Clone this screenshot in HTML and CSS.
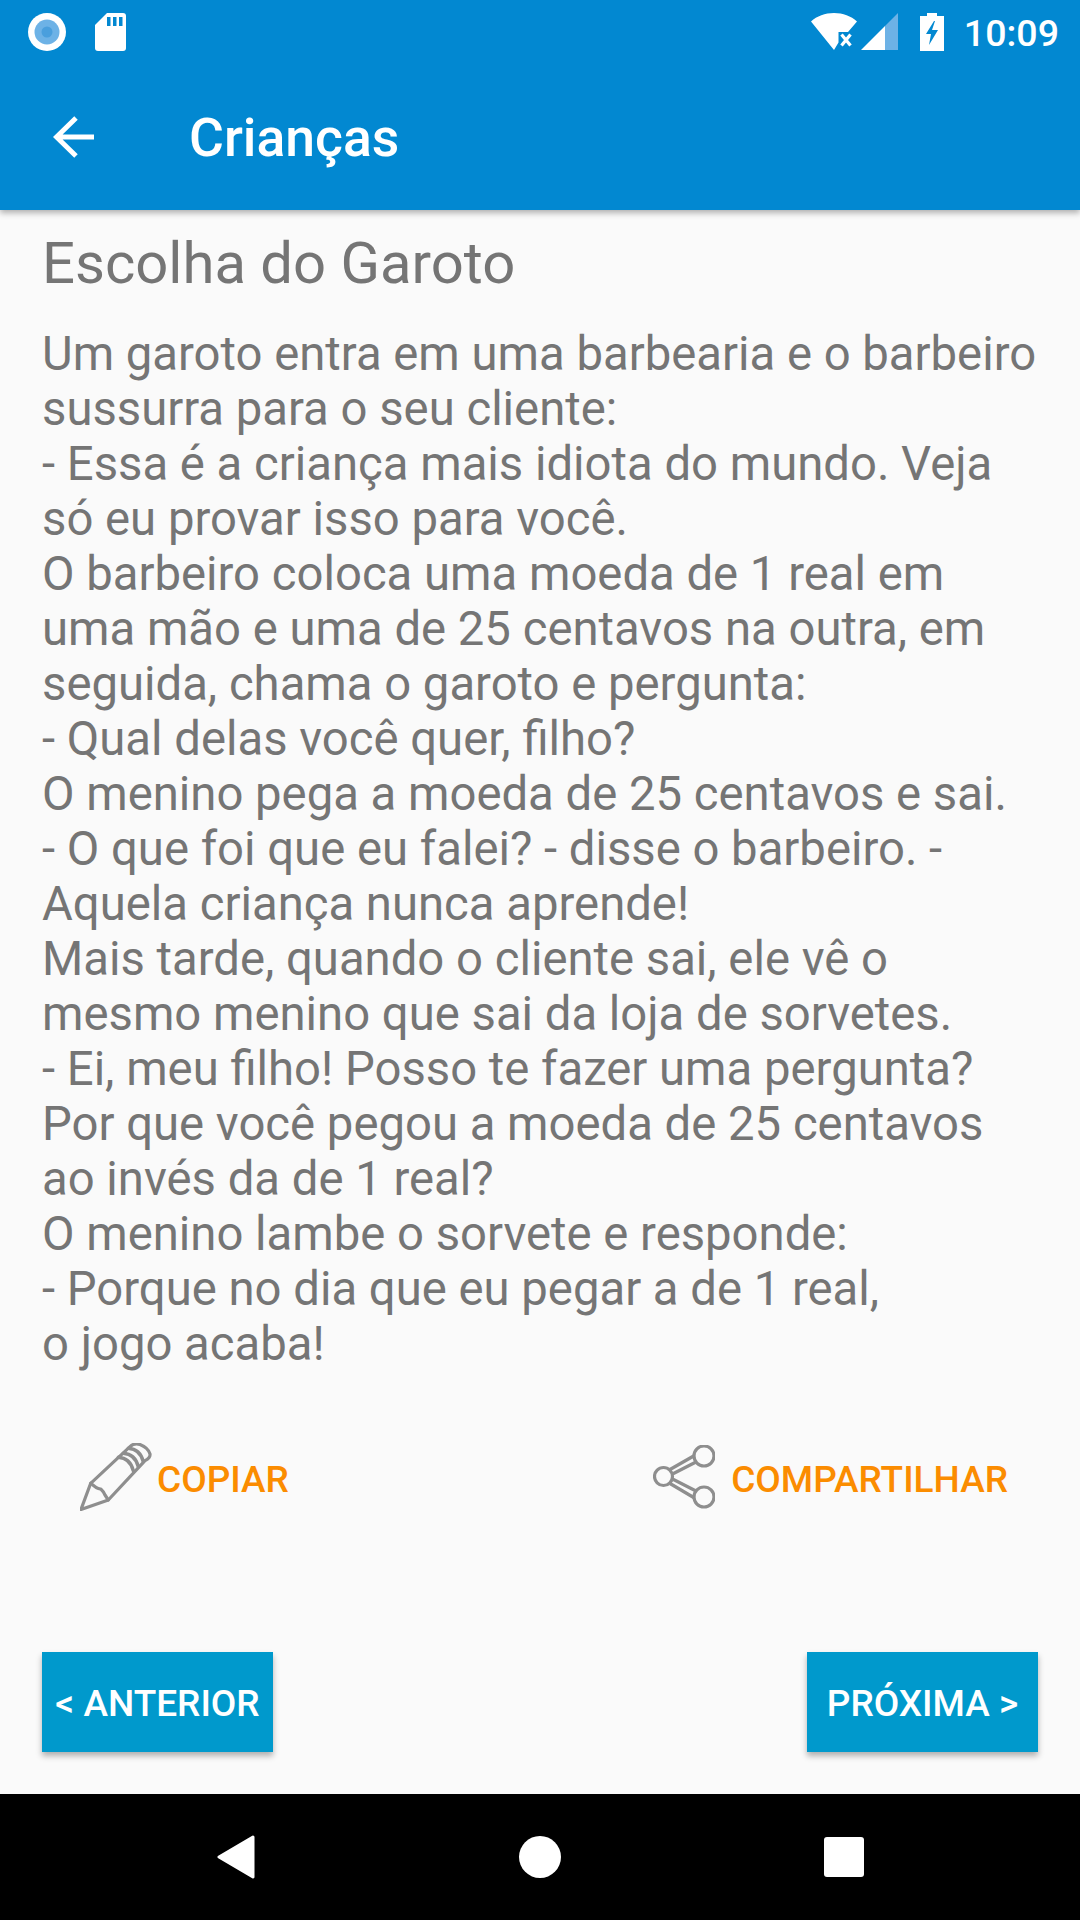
FILE: index.html
```html
<!DOCTYPE html>
<html lang="pt">
<head>
<meta charset="utf-8">
<title>Crianças</title>
<link rel="stylesheet" href="styles.css">
</head>
<body>
<div class="screen">
  <header class="header">
    <div class="statusbar">
      <div class="status-left">
        <svg class="ic-rec" width="38" height="38" viewBox="0 0 38 38"><circle cx="19" cy="19" r="19" fill="#fff"/><circle cx="19" cy="19" r="12.500" fill="#6db2e6"/><circle cx="19" cy="19" r="5.500" fill="#4a9fdd"/></svg>
        <svg class="ic-sd" width="31" height="38" viewBox="0 0 31 38"><path d="M12 0H28a3 3 0 0 1 3 3V35a3 3 0 0 1-3 3H3a3 3 0 0 1-3-3V12Z" fill="#fff"/><path d="M12 4h3.500v9H12zM18 4h3.500v9H18zM24 4h3.500v9H24z" fill="#0288d1"/></svg>
      </div>
      <div class="status-right">
        <svg class="ic-wifi" width="46" height="38" viewBox="0 0 46 38"><path d="M0 8.500C6 3 14 0 23 0s17 3 23 8.500L37 19H27.500V29.500L23 37Z" fill="#fff"/><path d="M30.500 21.500l9 11M39.500 21.500l-9 11" stroke="#fff" stroke-width="3.200" fill="none"/></svg>
        <svg class="ic-signal" width="38" height="38" viewBox="0 0 38 38"><path d="M37 0V37H24V13Z" fill="#6db2e6"/><path d="M24 13V37H0Z" fill="#fff"/></svg>
        <svg class="ic-batt" width="24" height="38" viewBox="0 0 24 38"><path d="M7 0h10v3h7V38H0V3h7Z" fill="#fff"/><path d="M14 8L6 21h5l-2 11 9-15h-6l3-9Z" fill="#0288d1"/></svg>
        <span class="clock">10:09</span>
      </div>
    </div>
    <div class="appbar">
      <svg class="ic-back" width="42" height="42" viewBox="0 0 42 42"><path d="M41 21H3M23 2 3.500 21 23 40" fill="none" stroke="#fff" stroke-width="5"/></svg>
      <h1 class="appbar-title">Crianças</h1>
    </div>
  </header>

  <main class="content">
    <h2 class="joke-title">Escolha do Garoto</h2>
    <p class="joke-text">Um garoto entra em uma barbearia e o barbeiro sussurra para o seu cliente:<br>- Essa é a criança mais idiota do mundo. Veja só eu provar isso para você.<br>O barbeiro coloca uma moeda de 1 real em uma mão e uma de 25 centavos na outra, em seguida, chama o garoto e pergunta:<br>- Qual delas você quer, filho?<br>O menino pega a moeda de 25 centavos e sai.<br>- O que foi que eu falei? - disse o barbeiro. - Aquela criança nunca aprende!<br>Mais tarde, quando o cliente sai, ele vê o mesmo menino que sai da loja de sorvetes.<br>- Ei, meu filho! Posso te fazer uma pergunta? Por que você pegou a moeda de 25 centavos ao invés da de 1 real?<br>O menino lambe o sorvete e responde:<br>- Porque no dia que eu pegar a de 1 real,<br>o jogo acaba!</p>
    <div class="actions">
      <div class="action">
        <svg class="ic-pencil" width="72" height="68" viewBox="0 0 72 68" fill="none" stroke="#8e8e8e" stroke-width="3.200" stroke-linejoin="round" stroke-linecap="round"><path d="M1 66.500 10.700 40.300 50 3.700C53 .8 57 .3 60 1.500 65 3.500 69 7.500 70 11 70.500 14 68 16 65 17.700L28.300 57Z"/><path d="M10.700 40.300C13 42 15.500 44.500 17.700 45.300 19 45.800 20 45.800 21 46.300 23 48 24 50 25 52L28.300 57"/><path d="M38.300 14.300Q50 15 53.300 27.700M43.300 10.300Q55 11 58.300 23.700M48.300 5.300Q60 6 63.300 18.700" stroke-width="3.400"/></svg>
        <span class="action-label">COPIAR</span>
      </div>
      <div class="action">
        <svg class="ic-share" width="62" height="64" viewBox="0 0 62 64" fill="none" stroke="#8e8e8e" stroke-width="3.200"><circle cx="10.500" cy="31.500" r="9"/><circle cx="51" cy="11" r="10"/><circle cx="51" cy="52" r="10"/><path d="M17 24.500 41.500 10.500M19.500 29 43 17M19.500 34 43 46M17 38.500 41.500 53"/></svg>
        <span class="action-label">COMPARTILHAR</span>
      </div>
    </div>
    <div class="nav-buttons">
      <button class="btn">&lt; ANTERIOR</button>
      <button class="btn">PRÓXIMA &gt;</button>
    </div>
  </main>

  <nav class="navbar">
    <svg width="38" height="44" viewBox="0 0 38 44"><path d="M36 2 2 22 36 42Z" fill="#fff" stroke="#fff" stroke-width="3" stroke-linejoin="round"/></svg>
    <svg width="42" height="42" viewBox="0 0 42 42"><circle cx="21" cy="21" r="21" fill="#fff"/></svg>
    <svg width="40" height="40" viewBox="0 0 40 40"><rect width="40" height="40" rx="3" fill="#fff"/></svg>
  </nav>
</div>
</body>
</html>
```
FILE: styles.css
```css
* { box-sizing: border-box; margin: 0; padding: 0; }
html, body { width: 1080px; height: 1920px; overflow: hidden; }
body { font-family: Roboto, sans-serif; background: #fafafa; }
.screen { width: 1080px; height: 1920px; display: flex; flex-direction: column; }

.header { height: 210px; background: #0288d1; box-shadow: 0 3px 6px rgba(0,0,0,.3); flex: none; position: relative; z-index: 1; }
.statusbar { height: 63px; display: flex; justify-content: space-between; align-items: center; padding: 0 21px 0 28px; }
.status-left { display: flex; align-items: center; gap: 29px; }
.status-right { display: flex; align-items: center; }
.ic-signal { margin-left: 4px; }
.ic-batt { margin-left: 21px; }
.clock { color: #fff; font-size: 37.5px; font-weight: 500; margin-left: 20px; line-height: 63px; padding-top: 4px; }
.appbar { height: 147px; display: flex; align-items: center; padding-left: 53px; }
.appbar-title { color: #fff; font-size: 53.500px; font-weight: 500; margin-left: 94px; padding-top: 2px; }

.content { flex: 1; display: flex; flex-direction: column; padding: 0 42px; min-height: 0; }
.joke-title { font-size: 58px; font-weight: 400; color: #757575; line-height: 68px; margin-top: 19px; }
.joke-text { font-size: 47.250px; line-height: 55px; color: #757575; margin-top: 30px; }
.actions { display: flex; justify-content: space-between; margin-top: 71px; padding: 0 30px 0 38px; }
.action { display: flex; align-items: center; gap: 5px; }
.ic-pencil { margin-bottom: 4px; }
.ic-share { margin-right: 11px; margin-bottom: 4px; }
.action-label { font-size: 37px; font-weight: 500; color: #fb8c00; }
.nav-buttons { display: flex; justify-content: space-between; margin-top: auto; margin-bottom: 42px; }
.btn { width: 231px; height: 100px; border: 0; padding-top: 3px; background: #0099cc; color: #fff; font: 500 37px Roboto, sans-serif; box-shadow: 0 4px 6px rgba(0,0,0,.3); white-space: nowrap; }

.navbar { height: 126px; background: #000; flex: none; display: flex; align-items: center; padding-left: 217px; }
.navbar svg:nth-child(2) { margin-left: 264px; }
.navbar svg:nth-child(3) { margin-left: 263px; }
```
